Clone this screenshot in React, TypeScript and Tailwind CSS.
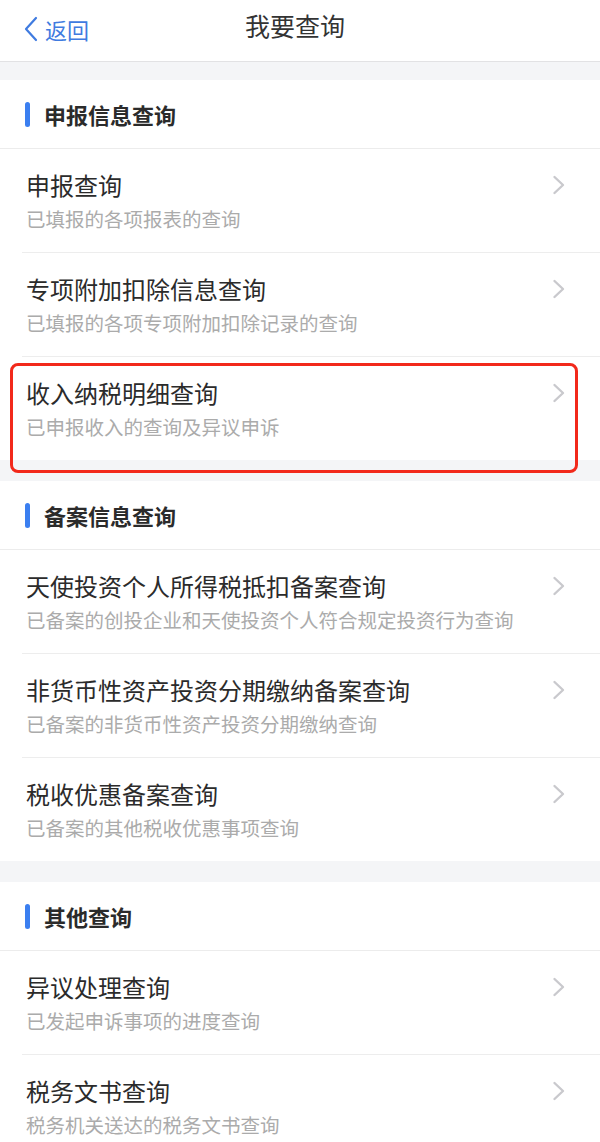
type Item = { title: string; desc: string; marked?: boolean };
type Group = { name: string; items: Item[] };

const groups: Group[] = [
  {
    name: "申报信息查询",
    items: [
      { title: "申报查询", desc: "已填报的各项报表的查询" },
      { title: "专项附加扣除信息查询", desc: "已填报的各项专项附加扣除记录的查询" },
      { title: "收入纳税明细查询", desc: "已申报收入的查询及异议申诉", marked: true },
    ],
  },
  {
    name: "备案信息查询",
    items: [
      { title: "天使投资个人所得税抵扣备案查询", desc: "已备案的创投企业和天使投资个人符合规定投资行为查询" },
      { title: "非货币性资产投资分期缴纳备案查询", desc: "已备案的非货币性资产投资分期缴纳查询" },
      { title: "税收优惠备案查询", desc: "已备案的其他税收优惠事项查询" },
    ],
  },
  {
    name: "其他查询",
    items: [
      { title: "异议处理查询", desc: "已发起申诉事项的进度查询" },
      { title: "税务文书查询", desc: "税务机关送达的税务文书查询" },
    ],
  },
];

const Arrow = () => (
  <svg width="14" height="20" viewBox="0 0 14 20" className="mt-[7px]">
    <polyline points="2.5,2 11,10 2.5,18" fill="none" stroke="#c9c9cd" strokeWidth="2.4" strokeLinecap="round" strokeLinejoin="round" />
  </svg>
);

const Row = ({ item, last }: { item: Item; last: boolean }) => (
  <div className="relative">
    <div className="flex h-[103px] items-start pl-[26px] pr-[34px] pt-[19px]">
      <div className="flex-1">
        <div className="text-[24px] leading-[34px] text-[#2b2b2b]">{item.title}</div>
        <div className="text-[19.5px] leading-[34px] text-[#ababab]">{item.desc}</div>
      </div>
      <Arrow />
    </div>
    {!last && <div className="ml-[22px] h-px bg-[#ededed]" />}
    {item.marked && (
      <div className="pointer-events-none absolute left-[10px] right-[22px] top-[6px] h-[110px] rounded-[8px] border-[3px] border-[#f2291b]" />
    )}
  </div>
);

export default function App() {
  return (
    <div
      className="min-h-[1142px] bg-[#f4f5f7]"
      style={{ fontFamily: '"Noto Sans CJK SC", "Noto Sans", sans-serif' }}
    >
      <div className="relative flex h-[62px] justify-center border-b border-[#e2e2e4] bg-white pr-[10px] pt-[8px]">
        <div className="absolute left-[24px] top-[15px] flex items-center gap-[7px] text-[#3f7be0]">
          <svg width="14" height="26" viewBox="0 0 14 26">
            <polyline points="12,2 2,13 12,24" fill="none" stroke="#3f7be0" strokeWidth="2.2" strokeLinecap="round" strokeLinejoin="round" />
          </svg>
          <span className="text-[22px] leading-[28px]">返回</span>
        </div>
        <span className="text-[25px] leading-[34px] text-[#333]">我要查询</span>
      </div>

      <div className="flex flex-col gap-[21px] pt-[18px]">
        {groups.map((g) => (
          <div key={g.name} className="bg-white">
            <div className="flex h-[69px] items-center gap-[14px] border-b border-[#ececec] pl-[25px]">
              <div className="h-[25px] w-[5px] rounded-full bg-[#3b7ff0]" />
              <span className="text-[22px] font-bold text-[#2b2b2b]">{g.name}</span>
            </div>
            {g.items.map((it, i) => (
              <Row key={it.title} item={it} last={i === g.items.length - 1} />
            ))}
          </div>
        ))}
      </div>
    </div>
  );
}
